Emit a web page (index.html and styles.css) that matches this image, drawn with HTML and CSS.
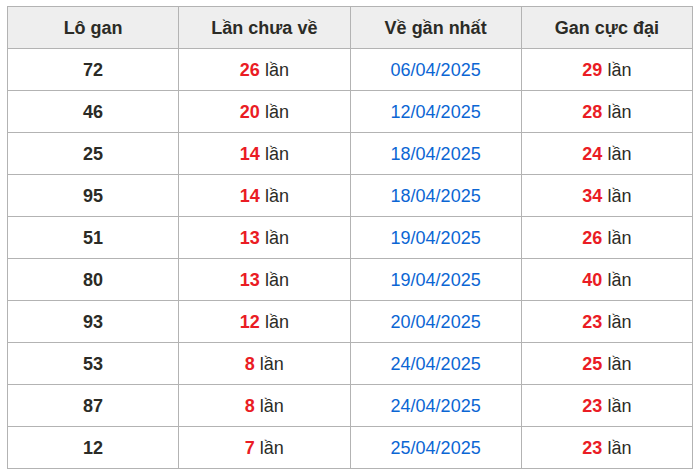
FILE: index.html
```html
<!DOCTYPE html>
<html lang="vi">
<head>
<meta charset="utf-8">
<link rel="stylesheet" href="styles.css">
</head>
<body>
<table class="gan">
<thead>
<tr><th>Lô gan</th><th>Lần chưa về</th><th>Về gần nhất</th><th>Gan cực đại</th></tr>
</thead>
<tbody>
<tr><td class="num">72</td><td><b class="red">26</b> lần</td><td class="date">06/04/2025</td><td><b class="red">29</b> lần</td></tr>
<tr><td class="num">46</td><td><b class="red">20</b> lần</td><td class="date">12/04/2025</td><td><b class="red">28</b> lần</td></tr>
<tr><td class="num">25</td><td><b class="red">14</b> lần</td><td class="date">18/04/2025</td><td><b class="red">24</b> lần</td></tr>
<tr><td class="num">95</td><td><b class="red">14</b> lần</td><td class="date">18/04/2025</td><td><b class="red">34</b> lần</td></tr>
<tr><td class="num">51</td><td><b class="red">13</b> lần</td><td class="date">19/04/2025</td><td><b class="red">26</b> lần</td></tr>
<tr><td class="num">80</td><td><b class="red">13</b> lần</td><td class="date">19/04/2025</td><td><b class="red">40</b> lần</td></tr>
<tr><td class="num">93</td><td><b class="red">12</b> lần</td><td class="date">20/04/2025</td><td><b class="red">23</b> lần</td></tr>
<tr><td class="num">53</td><td><b class="red">8</b> lần</td><td class="date">24/04/2025</td><td><b class="red">25</b> lần</td></tr>
<tr><td class="num">87</td><td><b class="red">8</b> lần</td><td class="date">24/04/2025</td><td><b class="red">23</b> lần</td></tr>
<tr><td class="num">12</td><td><b class="red">7</b> lần</td><td class="date">25/04/2025</td><td><b class="red">23</b> lần</td></tr>
</tbody>
</table>
</body>
</html>
```
FILE: styles.css
```css
html, body {
  margin: 0;
  background: #ffffff;
}
body {
  padding: 6px 7px;
  font-family: "Liberation Sans", Arial, sans-serif;
  font-size: 18px;
  color: #2b2b26;
}
.gan {
  width: 686px;
  border-collapse: collapse;
  table-layout: fixed;
  border: 1px solid #a9a9a9;
}
.gan th,
.gan td {
  border: 1px solid #b3b3b3;
  height: 41px;
  padding: 0;
  text-align: center;
  vertical-align: middle;
  line-height: 20px;
}
.gan th {
  background: #eeeeee;
  font-weight: bold;
  color: #2b2b26;
}
.num {
  font-weight: bold;
}
.red {
  color: #ea1c24;
  font-weight: bold;
}
.date {
  color: #0b66d4;
}
```
